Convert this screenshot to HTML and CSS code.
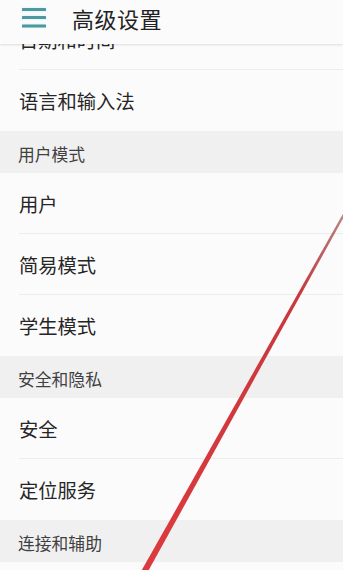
FILE: index.html
```html
<!DOCTYPE html>
<html lang="zh">
<head>
<meta charset="utf-8">
<link rel="stylesheet" href="styles.css">
</head>
<body>
<div class="page">
  <header class="topbar">
    <svg class="menu-icon" width="24" height="20" viewBox="0 0 24 20">
      <rect x="0" y="0" width="24" height="3" rx="0.5" fill="#4e98a1"/>
      <rect x="0" y="8" width="24" height="3" rx="0.5" fill="#4e98a1"/>
      <rect x="0" y="16.5" width="24" height="3" rx="0.5" fill="#4e98a1"/>
    </svg>
    <h1 class="title">高级设置</h1>
  </header>

  <div class="viewport">
    <main class="list">
      <div class="group">
        <div class="row">日期和时间</div>
        <div class="row">语言和输入法</div>
      </div>
      <div class="section">用户模式</div>
      <div class="group">
        <div class="row">用户</div>
        <div class="row">简易模式</div>
        <div class="row">学生模式</div>
      </div>
      <div class="section">安全和隐私</div>
      <div class="group">
        <div class="row">安全</div>
        <div class="row">定位服务</div>
      </div>
      <div class="section">连接和辅助</div>
      <div class="group">
        <div class="row"></div>
      </div>
    </main>
  </div>

  <svg class="stroke" width="343" height="570" viewBox="0 0 343 570">
    <defs>
      <linearGradient id="g" x1="0" y1="200" x2="0" y2="570" gradientUnits="userSpaceOnUse">
        <stop offset="0" stop-color="#8e4a4a" stop-opacity="0.6"/>
        <stop offset="0.25" stop-color="#c8383d"/>
        <stop offset="1" stop-color="#dc3a3e"/>
      </linearGradient>
    </defs>
    <polygon points="349,203 351,204 146,575 139,575" fill="url(#g)"/>
  </svg>
</div>
</body>
</html>
```

FILE: styles.css
```css
* { box-sizing: border-box; }
html, body {
  margin: 0;
  padding: 0;
  background: #fcfbfc;
}
body {
  font-family: "Noto Sans CJK SC", "Noto Sans", sans-serif;
  color: #2a2a2a;
  overflow: hidden;
}
.page {
  position: relative;
  width: 343px;
  height: 570px;
  overflow: hidden;
  display: flex;
  flex-direction: column;
}
.topbar {
  flex: none;
  height: 44px;
  position: relative;
  z-index: 2;
  display: flex;
  align-items: center;
  background: #fcfbfc;
  padding-left: 22px;
  padding-bottom: 8px;
  box-shadow: 0 1px 2px rgba(0, 0, 0, 0.12);
}
.menu-icon {
  flex: none;
  filter: drop-shadow(0 0 1px #c8f0f2);
}
.title {
  margin: 0 0 0 26px;
  font-size: 22px;
  font-weight: 400;
  color: #222;
  letter-spacing: 0.5px;
  line-height: 1;
}
.viewport {
  flex: 1;
  overflow: hidden;
}
.list {
  margin-top: -35px;
  display: flex;
  flex-direction: column;
}
.group {
  display: flex;
  flex-direction: column;
  padding-left: 19px;
}
.row {
  height: 61px;
  flex: none;
  display: flex;
  align-items: center;
  font-size: 19.3px;
  color: #262626;
  border-bottom: 1px solid #ececec;
  padding-top: 1px;
}
.row:last-child {
  border-bottom: none;
}
.section {
  height: 42px;
  flex: none;
  display: flex;
  align-items: center;
  padding-left: 18px;
  padding-top: 4px;
  background: #f1f0f1;
  font-size: 16.8px;
  color: #404040;
}
.stroke {
  position: absolute;
  top: 0;
  left: 0;
  z-index: 3;
  pointer-events: none;
}
```
